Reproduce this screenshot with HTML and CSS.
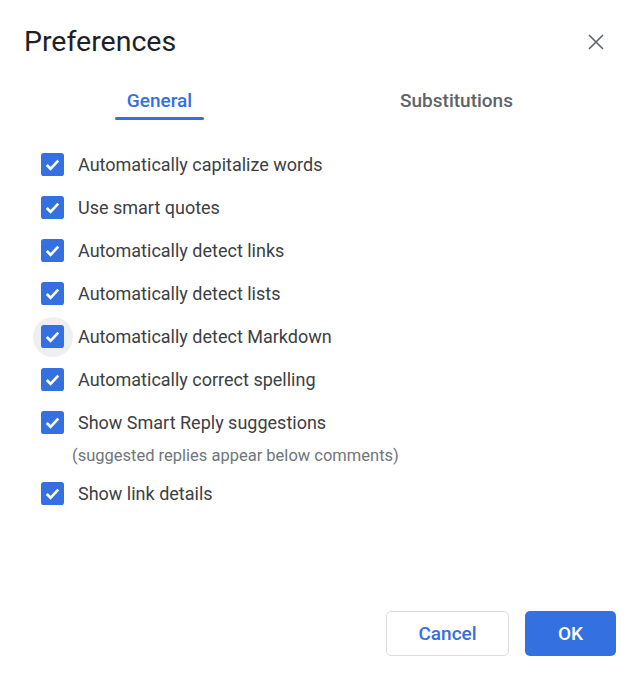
FILE: index.html
```html
<!DOCTYPE html>
<html lang="en">
<head>
  <meta charset="UTF-8" />
  <meta name="viewport" content="width=device-width, initial-scale=1.0"/>
  <title>Preferences</title>
  <link rel="stylesheet" href="styles.css">
</head>
<body>
  <div class="dialog">
    <header class="dialog-head">
      <h1>Preferences</h1>
      <button class="close" aria-label="Close">
        <svg width="16" height="16" viewBox="0 0 16 16"><path d="M1 1 L15 15 M15 1 L1 15" stroke="#5f6368" stroke-width="1.6" fill="none"/></svg>
      </button>
    </header>

    <nav class="tabs">
      <button class="tab active">General</button>
      <button class="tab">Substitutions</button>
    </nav>

    <ul class="options">
      <li class="option"><span class="box"><svg viewBox="0 0 24 24"><rect width="24" height="24" rx="3"/><path d="M6 12.5 L10 16.5 L18 8"/></svg></span>Automatically capitalize words</li>
      <li class="option"><span class="box"><svg viewBox="0 0 24 24"><rect width="24" height="24" rx="3"/><path d="M6 12.5 L10 16.5 L18 8"/></svg></span>Use smart quotes</li>
      <li class="option"><span class="box"><svg viewBox="0 0 24 24"><rect width="24" height="24" rx="3"/><path d="M6 12.5 L10 16.5 L18 8"/></svg></span>Automatically detect links</li>
      <li class="option"><span class="box"><svg viewBox="0 0 24 24"><rect width="24" height="24" rx="3"/><path d="M6 12.5 L10 16.5 L18 8"/></svg></span>Automatically detect lists</li>
      <li class="option"><span class="box focused"><svg viewBox="0 0 24 24"><rect width="24" height="24" rx="3"/><path d="M6 12.5 L10 16.5 L18 8"/></svg></span>Automatically detect Markdown</li>
      <li class="option"><span class="box"><svg viewBox="0 0 24 24"><rect width="24" height="24" rx="3"/><path d="M6 12.5 L10 16.5 L18 8"/></svg></span>Automatically correct spelling</li>
      <li class="option"><span class="box"><svg viewBox="0 0 24 24"><rect width="24" height="24" rx="3"/><path d="M6 12.5 L10 16.5 L18 8"/></svg></span>Show Smart Reply suggestions</li>
      <li class="hint">(suggested replies appear below comments)</li>
      <li class="option"><span class="box"><svg viewBox="0 0 24 24"><rect width="24" height="24" rx="3"/><path d="M6 12.5 L10 16.5 L18 8"/></svg></span>Show link details</li>
    </ul>

    <footer class="actions">
      <button class="btn btn-cancel">Cancel</button>
      <button class="btn btn-ok">OK</button>
    </footer>
  </div>
</body>
</html>
```

FILE: styles.css
```css
* {
  margin: 0;
  padding: 0;
  box-sizing: border-box;
}
html, body {
  height: 100%;
  width: 100%;
  overflow: hidden;
}
body {
  font-family: Roboto, 'Liberation Sans', sans-serif;
  background: #fff;
  color: #3c4043;
}
button {
  font-family: inherit;
  border: none;
  background: none;
  cursor: pointer;
}
.dialog {
  height: 100%;
  display: flex;
  flex-direction: column;
}
.dialog-head {
  display: flex;
  align-items: center;
  justify-content: space-between;
  padding: 24px 28px 0 24px;
}
.dialog-head h1 {
  font-size: 28.5px;
  font-weight: 400;
  line-height: 36px;
  color: #202124;
}
.close {
  width: 32px;
  height: 32px;
  display: flex;
  align-items: center;
  justify-content: center;
}
.tabs {
  display: grid;
  grid-template-columns: 1fr 1fr;
  margin: 0 35px 0 11px;
}
.tab {
  position: relative;
  padding: 31px 0 9px;
  font-size: 19px;
  font-weight: 500;
  line-height: 20px;
  color: #5f6368;
}
.tab.active {
  color: #3470e0;
}
.tab.active::after {
  content: "";
  position: absolute;
  bottom: 0;
  left: 50%;
  width: 89px;
  height: 3px;
  margin-left: -44.5px;
  background: #3470e0;
  border-radius: 2px;
}
.options {
  list-style: none;
  margin-top: 23px;
  padding-left: 41px;
}
.option {
  display: flex;
  align-items: center;
  gap: 14px;
  height: 43px;
  font-size: 18px;
  color: #3c4043;
}
.box {
  position: relative;
  width: 23px;
  height: 23px;
  flex: none;
}
.box svg {
  position: relative;
  display: block;
  width: 23px;
  height: 23px;
}
.box rect {
  fill: #3470e0;
}
.box path {
  fill: none;
  stroke: #fff;
  stroke-width: 2.8;
}
.box.focused::before {
  content: "";
  position: absolute;
  left: 50%;
  top: 50%;
  width: 40px;
  height: 40px;
  margin: -20px 0 0 -20px;
  border-radius: 50%;
  background: #eeeff0;
}
.hint {
  margin-left: 31px;
  padding: 1px 0 6px;
  font-size: 16.5px;
  line-height: 21px;
  color: #70757a;
}
.actions {
  margin-top: auto;
  display: flex;
  justify-content: flex-end;
  gap: 16px;
  padding: 0 24px 18px 0;
}
.btn {
  height: 45px;
  border-radius: 5px;
  font-size: 19px;
  font-weight: 500;
}
.btn-cancel {
  width: 123px;
  border: 1px solid #dadce0;
  color: #3470e0;
  background: #fff;
}
.btn-ok {
  width: 91px;
  background: #3470e0;
  color: #fff;
}
```
